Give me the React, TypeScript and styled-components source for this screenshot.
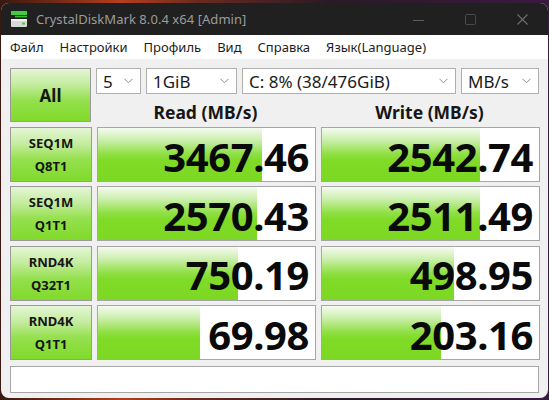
import React from "react";
import styled, { createGlobalStyle } from "styled-components";

const GlobalStyle = createGlobalStyle`
  html, body {
    margin: 0;
    padding: 0;
    width: 549px;
    height: 400px;
    overflow: hidden;
    background: linear-gradient(90deg, #3a1812 0%, #b63e1c 22%, #6a2a20 36%, #2a1a26 60%, #3a1a40 100%);
    font-family: "Noto Sans", "Open Sans", sans-serif;
  }
`;

const results = [
  { label: ["SEQ1M", "Q8T1"], read: "3467.46", readPct: 75.5, write: "2542.74", writePct: 73 },
  { label: ["SEQ1M", "Q1T1"], read: "2570.43", readPct: 73.5, write: "2511.49", writePct: 73 },
  { label: ["RND4K", "Q32T1"], read: "750.19", readPct: 64.5, write: "498.95", writePct: 61 },
  { label: ["RND4K", "Q1T1"], read: "69.98", readPct: 47, write: "203.16", writePct: 55 },
];

const menu = ["Файл", "Настройки", "Профиль", "Вид", "Справка", "Язык(Language)"];

const App = () => (
  <>
    <GlobalStyle />
    <Window>
      <TitleBar>
        <AppIcon />
        <Title>CrystalDiskMark 8.0.4 x64 [Admin]</Title>
        <Controls>
          <ControlButton>
            <svg width="11" height="11" viewBox="0 0 11 11">
              <line x1="0" y1="5.5" x2="11" y2="5.5" stroke="#5c5c5c" strokeWidth="1" />
            </svg>
          </ControlButton>
          <ControlButton>
            <svg width="11" height="11" viewBox="0 0 11 11">
              <rect x="0.5" y="0.5" width="10" height="10" rx="1" fill="none" stroke="#4a4a4a" strokeWidth="1" />
            </svg>
          </ControlButton>
          <ControlButton>
            <svg width="11" height="11" viewBox="0 0 11 11">
              <path d="M0.5 0.5 L10.5 10.5 M10.5 0.5 L0.5 10.5" stroke="#6e6e6e" strokeWidth="1.1" />
            </svg>
          </ControlButton>
        </Controls>
      </TitleBar>
      <MenuBar>
        {menu.map((m) => (
          <MenuItem key={m}>{m}</MenuItem>
        ))}
      </MenuBar>
      <Content>
        <TopRow>
          <AllButton>All</AllButton>
          <TopRight>
            <Selects>
              <Select width={45}>5</Select>
              <Select width={91}>1GiB</Select>
              <Select width={214}>C: 8% (38/476GiB)</Select>
              <Select width={78}>MB/s</Select>
            </Selects>
            <Headers>
              <Header>Read (MB/s)</Header>
              <Header>Write (MB/s)</Header>
            </Headers>
          </TopRight>
        </TopRow>
        {results.map((r) => (
          <Row key={r.label.join()}>
            <TestButton>
              <span>{r.label[0]}</span>
              <span>{r.label[1]}</span>
            </TestButton>
            <Cell>
              <Bar style={{ width: `${r.readPct}%` }} />
              <Value>{r.read}</Value>
            </Cell>
            <Cell>
              <Bar style={{ width: `${r.writePct}%` }} />
              <Value>{r.write}</Value>
            </Cell>
          </Row>
        ))}
        <Comment />
      </Content>
    </Window>
  </>
);

const AppIcon = () => (
  <IconBox>
    <svg width="18" height="18" viewBox="0 0 18 18">
      <rect x="1" y="1" width="16" height="4" fill="#3fcf3a" />
      <rect x="5" y="5.8" width="12" height="1.6" fill="#35b832" />
      <rect x="1" y="9" width="16" height="8" rx="1" fill="#d8d8d8" />
      <rect x="1" y="9" width="16" height="2" fill="#f0f0f0" />
      <rect x="12" y="12.5" width="3" height="2" fill="#44d040" />
    </svg>
  </IconBox>
);

const ChevronIcon = () => (
  <svg width="9" height="6" viewBox="0 0 9 6">
    <polyline points="0.5,0.8 4.5,4.8 8.5,0.8" fill="none" stroke="#8a8a8a" strokeWidth="1" />
  </svg>
);

const Window = styled.div`
  margin: 3px 1px 0 1px;
  height: 395px;
  border-radius: 8px;
  overflow: hidden;
  background: #f0f0f0;
  display: flex;
  flex-direction: column;
`;

const TitleBar = styled.div`
  height: 32px;
  background: #202020;
  display: flex;
  align-items: center;
  padding-left: 9px;
`;

const IconBox = styled.div`
  width: 18px;
  height: 18px;
  display: flex;
`;

const Title = styled.div`
  margin-left: 8px;
  color: #9c9c9c;
  font-size: 13px;
  letter-spacing: 0.05px;
`;

const Controls = styled.div`
  margin-left: auto;
  display: flex;
`;

const ControlButton = styled.div`
  width: 52px;
  height: 32px;
  display: flex;
  align-items: center;
  justify-content: center;
  &:first-child svg {
    margin-top: 2px;
  }
`;

const MenuBar = styled.div`
  height: 24px;
  background: #ffffff;
  display: flex;
  align-items: center;
  padding-left: 9px;
  gap: 16px;
`;

const MenuItem = styled.span`
  font-size: 13px;
  color: #1c1c1c;
`;

const Content = styled.div`
  padding: 9px 9px 0 9px;
  display: flex;
  flex-direction: column;
`;

const TopRow = styled.div`
  display: flex;
  gap: 5px;
  margin-bottom: 5px;
`;

const greenButton = `
  border: 1px solid #9a9a9a;
  background: linear-gradient(180deg, #e4f6d6 0%, #c4ec9e 30%, #94e04e 60%, #80da2a 100%);
  color: #161616;
  font-weight: 700;
  display: flex;
  align-items: center;
  justify-content: center;
  box-sizing: border-box;
`;

const AllButton = styled.div`
  ${greenButton}
  width: 82px;
  height: 54px;
  font-size: 17px;
`;

const TopRight = styled.div`
  display: flex;
  flex-direction: column;
  width: 443px;
`;

const Selects = styled.div`
  display: flex;
  gap: 5px;
  height: 26px;
`;

const SelectBox = styled.div<{ $width: number }>`
  width: ${(p) => p.$width}px;
  height: 26px;
  box-sizing: border-box;
  border: 1px solid #b0b0b0;
  background: #ffffff;
  display: flex;
  align-items: center;
  padding: 0 7px 0 6px;
  font-size: 17px;
  color: #1a1a1a;
  span {
    flex: 1;
    white-space: nowrap;
  }
`;

const Select = ({ width, children }: { width: number; children: React.ReactNode }) => (
  <SelectBox $width={width}>
    <span>{children}</span>
    <ChevronIcon />
  </SelectBox>
);

const Headers = styled.div`
  flex: 1;
  display: flex;
  gap: 5px;
  align-items: flex-end;
`;

const Header = styled.div`
  flex: 1;
  text-align: center;
  font-size: 17.5px;
  font-weight: 700;
  color: #161616;
  line-height: 22px;
  margin-bottom: -1px;
`;

const Row = styled.div`
  display: grid;
  grid-template-columns: 82px 219px 219px;
  column-gap: 5px;
  height: 55px;
  margin-bottom: 4.4px;
`;

const TestButton = styled.div`
  ${greenButton}
  flex-direction: column;
  font-size: 13px;
  line-height: 23px;
  padding-top: 1px;
`;

const Cell = styled.div`
  position: relative;
  border: 1px solid #a6a6a6;
  background: #ffffff;
  box-sizing: border-box;
  display: flex;
  align-items: center;
  justify-content: flex-end;
  overflow: hidden;
`;

const Bar = styled.div`
  position: absolute;
  left: 0;
  top: 0;
  bottom: 0;
  background: linear-gradient(180deg, #f4fbef 0%, #cdefb0 22%, #92e048 48%, #7fdb26 62%, #7cd822 100%);
`;

const Value = styled.div`
  position: relative;
  font-size: 40px;
  font-weight: 700;
  letter-spacing: -0.4px;
  color: #0a0a0a;
  padding-right: 6px;
  padding-top: 4px;
  line-height: 1;
`;

const Comment = styled.div`
  margin-top: 1px;
  height: 27px;
  border: 1px solid #a6a6a6;
  background: #ffffff;
  box-sizing: border-box;
`;

export default App;
